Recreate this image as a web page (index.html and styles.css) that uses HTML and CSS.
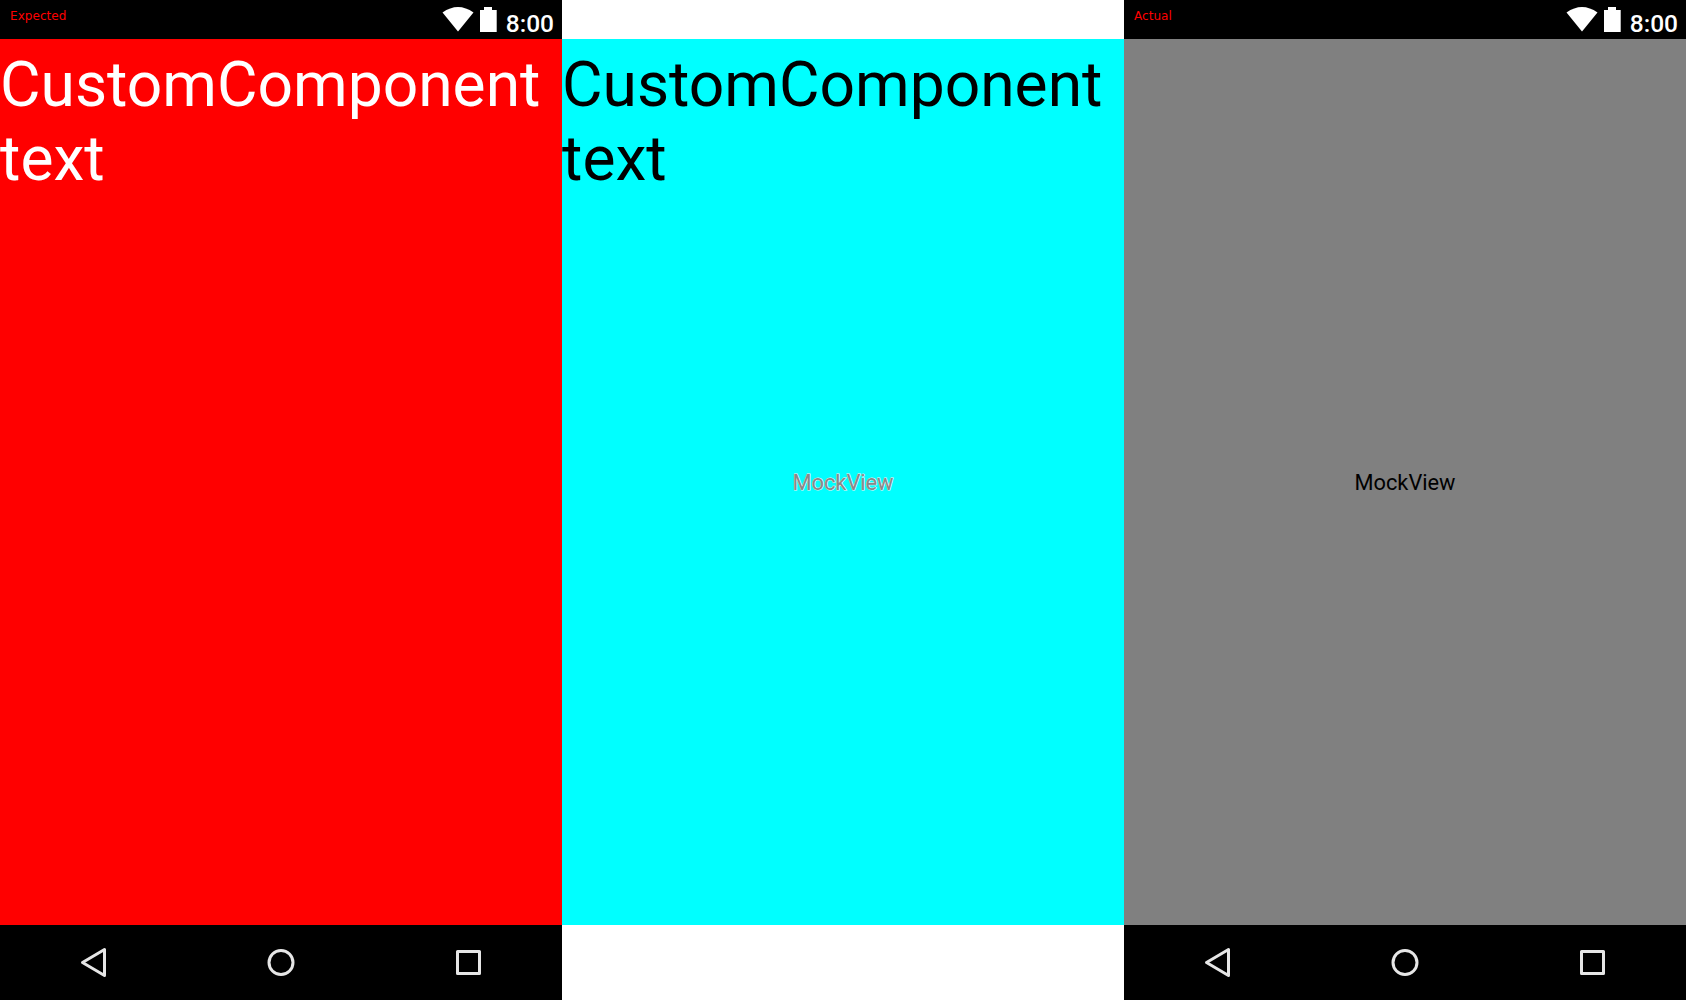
FILE: index.html
```
<!DOCTYPE html>
<html lang="en">
<head>
<meta charset="utf-8">
<title>Expected / Actual</title>
<link rel="stylesheet" href="styles.css">
</head>
<body>
<main class="compare">
  <section class="screen">
    <header class="status">
      <span class="label">Expected</span>
      <svg class="wifi" width="32" height="26" viewBox="0 0 32 26"><path d="M0.500 5.500Q16-5.500 31.500 5.500L16 24.500Z"/></svg>
      <svg class="battery" width="17" height="26" viewBox="0 0 17 26"><path d="M0 3H4V0H12V3H16.700V25H0Z"/></svg>
      <span class="clock">8:00</span>
    </header>
    <div class="content red"><p class="custom">CustomComponent text</p></div>
    <nav class="nav">
      <svg viewBox="0 0 32 32"><path d="M26.500 3.500V29.500L4.500 16.500Z"/></svg>
      <svg viewBox="0 0 32 32"><circle cx="16" cy="16.500" r="12"/></svg>
      <svg viewBox="0 0 32 32"><path d="M5.500 5.500H27.500V27.500H5.500Z"/></svg>
    </nav>
  </section>
  <section class="screen diff">
    <div class="content cyan"><p class="custom">CustomComponent text</p><p class="mock">MockView</p></div>
  </section>
  <section class="screen">
    <header class="status">
      <span class="label">Actual</span>
      <svg class="wifi" width="32" height="26" viewBox="0 0 32 26"><path d="M0.500 5.500Q16-5.500 31.500 5.500L16 24.500Z"/></svg>
      <svg class="battery" width="17" height="26" viewBox="0 0 17 26"><path d="M0 3H4V0H12V3H16.700V25H0Z"/></svg>
      <span class="clock">8:00</span>
    </header>
    <div class="content gray"><p class="mock">MockView</p></div>
    <nav class="nav">
      <svg viewBox="0 0 32 32"><path d="M26.500 3.500V29.500L4.500 16.500Z"/></svg>
      <svg viewBox="0 0 32 32"><circle cx="16" cy="16.500" r="12"/></svg>
      <svg viewBox="0 0 32 32"><path d="M5.500 5.500H27.500V27.500H5.500Z"/></svg>
    </nav>
  </section>
</main>
</body>
</html>
```

FILE: styles.css
```
body, p { margin: 0; }
body { font-family: Roboto, sans-serif; background: #fff; }
.compare { display: grid; grid-template-columns: repeat(3, 562px); height: 1000px; }
.screen { display: grid; grid-template-rows: 39px 886px 75px; min-width: 0; }
.status { display: flex; align-items: flex-start; background: #000; padding: 7px 8px 0 10px; box-sizing: border-box; }
.label { flex: 1; color: #f00; font: 12px/19px "DejaVu Sans", sans-serif; letter-spacing: 0.05px; }
.status svg { fill: #fff; flex: none; }
.battery { margin-left: 6px; }
.clock { color: #fff; font-size: 24.5px; font-weight: 500; line-height: 33px; margin-left: 9px; }
.content { display: grid; overflow: hidden; }
.diff .content { grid-row: 2; }
.custom { grid-area: 1 / 1; font-size: 62.3px; line-height: 74px; padding-top: 9px; }
.mock { grid-area: 1 / 1; place-self: center; font-size: 21.8px; line-height: 26px; padding-top: 2px; }
.red { background: #f00; color: #fff; }
.cyan { background: #0ff; color: #000; }
.cyan .mock { color: #888; -webkit-text-stroke: 1px #ffe8e8; paint-order: stroke fill; }
.gray { background: #808080; color: #000; }
.nav { display: flex; justify-content: space-around; align-items: flex-start; padding-top: 21px; background: #000; }
.nav svg { width: 32px; height: 32px; fill: none; stroke: #e6e6e6; stroke-width: 3; stroke-linejoin: round; }
```
